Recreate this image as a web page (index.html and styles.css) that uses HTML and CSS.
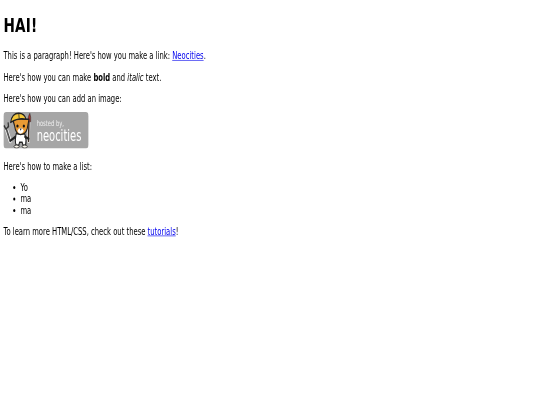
FILE: index.html
```html
<!DOCTYPE html>
<html lang="en">
<head>
    <meta charset="UTF-8">
    <meta name="viewport" content="width=device-width, initial-scale=1.0">
    <title>HAI!</title>
    <link rel="stylesheet" href="styles.css">
</head>
<body>
    <main class="page">
        <h1>HAI!</h1>
        <p>This is a paragraph! Here's how you make a link: <a href="#">Neocities</a>.</p>
        <p>Here's how you can make <strong>bold</strong> and <em>italic</em> text.</p>
        <p>Here's how you can add an image:</p>
        <svg class="badge" viewBox="0 0 200 60" width="200" height="60" role="img" aria-label="Hosted by Neocities">
            <rect width="200" height="60" rx="7" fill="#a6a6a6"/>
            <!-- wrench -->
            <path d="M16 48 L7 28" stroke="#fff" stroke-width="7" stroke-linecap="round"/>
            <path d="M16 48 L7 28" stroke="#555" stroke-width="4" stroke-linecap="round"/>
            <path d="M1 22 L6 28 L12 24 L11 17" fill="none" stroke="#333" stroke-width="3" stroke-linejoin="round"/>
            <!-- paintbrush -->
            <path d="M60 16 L59 48" stroke="#fff" stroke-width="6" stroke-linecap="round"/>
            <path d="M60 16 L59 48" stroke="#3a2a20" stroke-width="3.5" stroke-linecap="round"/>
            <path d="M57 16 Q58 6 62 2 Q65 8 64 16 Z" fill="#a8322a" stroke="#2a2a2a" stroke-width="1"/>
            <!-- cat body and feet -->
            <path d="M30 36 Q26 48 30 55 L36 55 L38 50 L44 50 L46 55 L52 55 Q55 46 50 36 Z" fill="#fff" stroke="#222" stroke-width="2.5"/>
            <ellipse cx="31" cy="57" rx="6" ry="2.5" fill="#f4f0e6" stroke="#222" stroke-width="1.5"/>
            <ellipse cx="50" cy="57" rx="6" ry="2.5" fill="#f4f0e6" stroke="#222" stroke-width="1.5"/>
            <path d="M28 41 L17 47" stroke="#222" stroke-width="4" stroke-linecap="round"/>
            <path d="M51 41 L59 44" stroke="#222" stroke-width="4" stroke-linecap="round"/>
            <!-- cat head -->
            <path d="M26 22 L21 10 L35 11 L52 12 L60 12 L56 27 Q52 37 40 37 Q29 37 26 22 Z" fill="#e89a34" stroke="#222" stroke-width="2.5" stroke-linejoin="round"/>
            <path d="M33 31 Q40 21 48 31 Q45 36 40 36 Q35 36 33 31 Z" fill="#fff"/>
            <circle cx="33" cy="23" r="2.6" fill="#111"/>
            <circle cx="48" cy="23" r="2.6" fill="#111"/>
            <path d="M38 27 L43 27 L40.5 31 Z" fill="#222"/>
            <!-- hard hat -->
            <path d="M17 17 Q20 2 36 2 Q50 2 53 12 Q36 9 17 17 Z" fill="#f3c73a" stroke="#222" stroke-width="2.5" stroke-linejoin="round"/>
            <path d="M36 2 L37 10" stroke="#222" stroke-width="1.5"/>
            <text class="badge-small" x="78" y="23" textLength="64" lengthAdjust="spacingAndGlyphs">hosted by,</text>
            <text class="badge-big" x="78" y="48" textLength="105" lengthAdjust="spacingAndGlyphs">neocities</text>
        </svg>
        <p>Here's how to make a list:</p>
        <ul>
            <li>Yo</li>
            <li>ma</li>
            <li>ma</li>
        </ul>
        <p>To learn more HTML/CSS, check out these <a href="#">tutorials</a>!</p>
    </main>
</body>
</html>
```

FILE: styles.css
```css
html, body {
    margin: 0;
    padding: 0;
    background-color: #fff;
    overflow: hidden;
}
/* the shot is a wide page squeezed into the window, so it stays soft */
.page {
    padding: 2px 8px 8px;
    font-family: "DejaVu Sans", sans-serif;
    font-size: 16px;
    color: #000;
    transform: scale(0.426, 0.6057);
    transform-origin: 0 0;
    filter: blur(0.5px);
}
h1 {
    letter-spacing: 0.5px;
}
a {
    color: #00e;
}
.badge {
    display: block;
    margin: -3px 0 20px;
}
.badge-small {
    font-family: "DejaVu Sans", sans-serif;
    font-size: 13px;
    fill: #eee;
}
.badge-big {
    font-family: "DejaVu Sans", sans-serif;
    font-size: 27px;
    fill: #fff;
}
```
